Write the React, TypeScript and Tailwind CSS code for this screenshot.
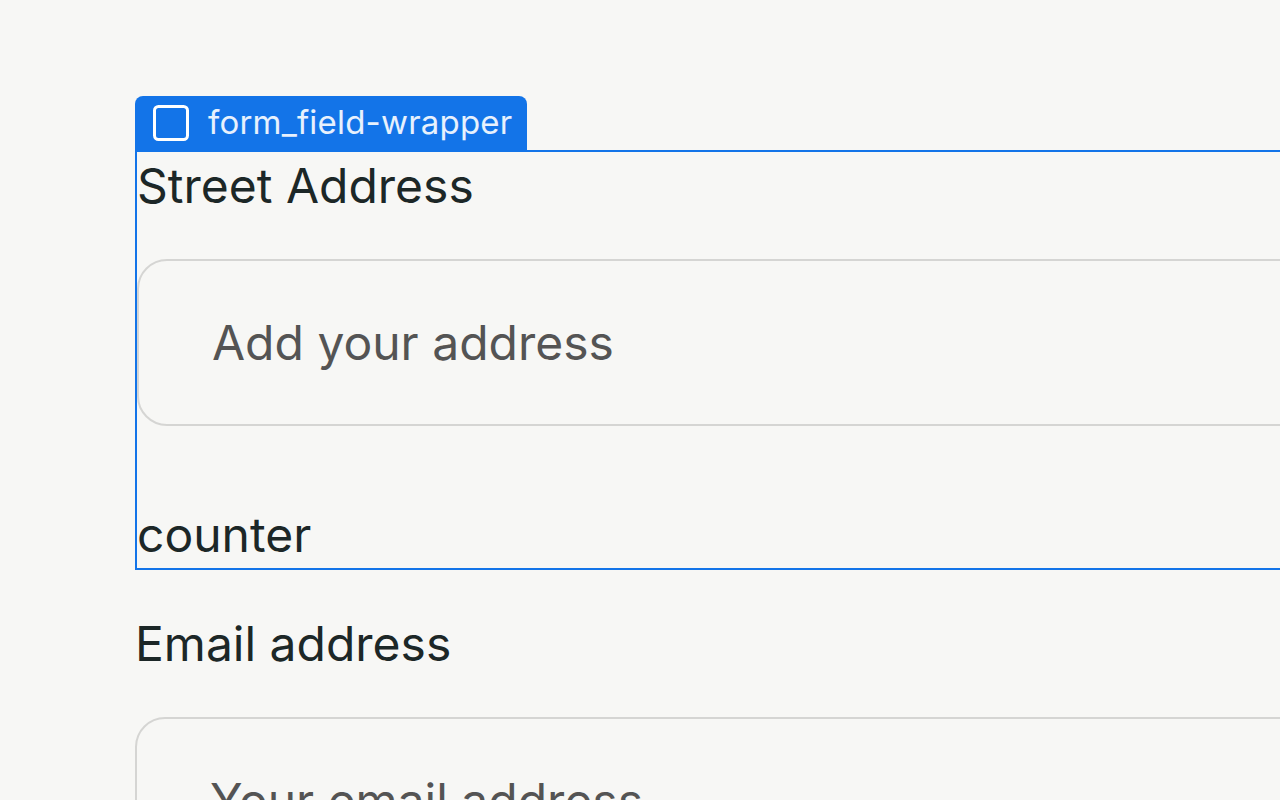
export default function App() {
  return (
    <main className="h-[800px] overflow-hidden bg-[#f7f7f5] pl-[135px] pt-[150px] font-['Inter','Liberation_Sans',sans-serif] text-[48px] leading-[68px] text-[#1c2727]">
      <FieldWrapper />
      <EmailField />
    </main>
  );
}

function SelectionTab() {
  return (
    <div className="absolute bottom-[calc(100%+2px)] left-[-2px] flex h-[54px] w-[392px] items-center gap-[19px] rounded-t-[8px] bg-[#1374e8] pl-[18px] text-[33px] leading-none text-white/90">
      <svg width="36" height="36" viewBox="0 0 36 36" fill="none" className="shrink-0">
        <rect x="1.5" y="1.5" width="33" height="33" rx="4" stroke="white" strokeWidth="3" />
      </svg>
      <span className="-mt-[2px] tracking-[0.2px]">form_field-wrapper</span>
    </div>
  );
}

function FieldWrapper() {
  return (
    <div className="relative w-[1300px] border-2 border-[#1374e8]">
      <SelectionTab />
      <label className="block mb-[39px]">Street Address</label>
      <div className="flex h-[167px] items-center rounded-[30px] border-2 border-[#d5d5d3] pl-[73px] text-[#545454]">
        Add your address
      </div>
      <div className="mt-[75px] leading-[67px]">counter</div>
    </div>
  );
}

function EmailField() {
  return (
    <div className="mt-[40px] w-[1300px]">
      <label className="block mb-[39px]">Email address</label>
      <div className="flex h-[167px] items-center rounded-[30px] border-2 border-[#d5d5d3] pl-[73px] text-[#545454]">
        Your email address
      </div>
    </div>
  );
}
